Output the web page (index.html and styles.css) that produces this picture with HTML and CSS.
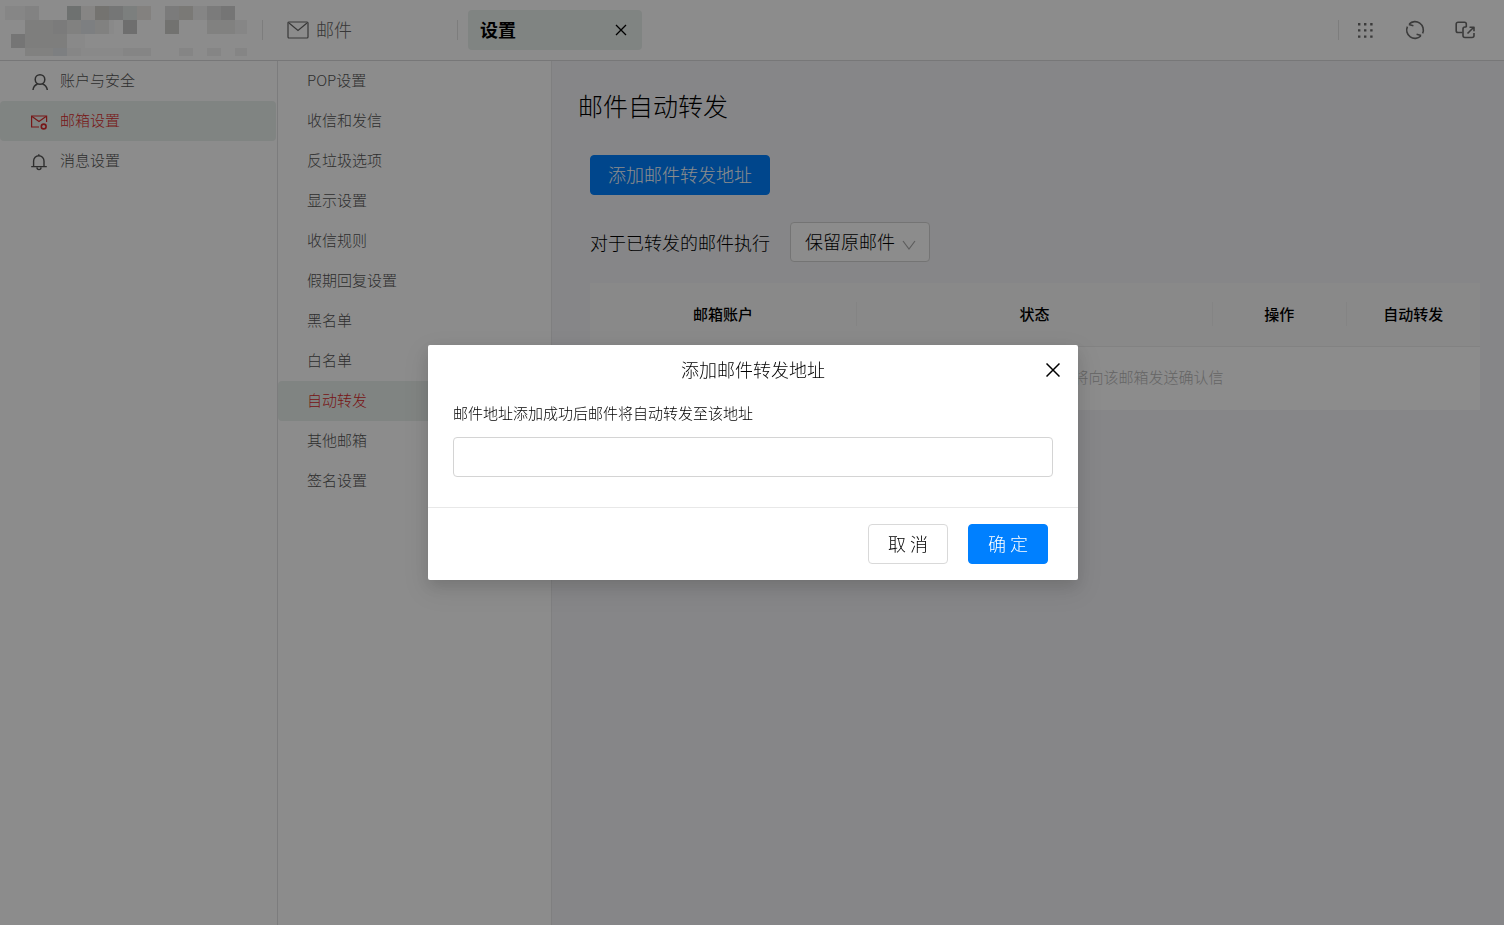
FILE: index.html
```html
<!DOCTYPE html>
<html lang="zh-CN">
<head>
<meta charset="utf-8">
<title>邮件自动转发</title>
<link rel="stylesheet" href="styles.css">
</head>
<body>
<div class="app">
  <header class="topbar">
    <div class="brand">
      <svg class="mosaic" width="242" height="50" viewBox="0 0 242 50" shape-rendering="crispEdges" aria-hidden="true">
        <path fill="#fafafa" d="M6 0h14v14H6zM104 14h5v14h-5zM62 28h18v14H62zM76 42h42v8H76z"/>
        <path fill="#f3f3f3" d="M20 0h14v14H20zM118 42h28v8h-28zM174 42h14v8h-14zM202 42h14v8h-14zM230 42h12v8h-12zM188 0h14v14h-14z"/>
        <path fill="#ededed" d="M20 0h14v14H20z"/>
        <path fill="#f4f4f4" d="M0 0h20v14H0z"/>
        <path fill="#c9cecc" d="M62 0h14v14H62z"/>
        <path fill="#f5f3f0" d="M76 0h14v14H76z"/>
        <path fill="#d3d2cd" d="M90 0h14v14H90z"/>
        <path fill="#d6d7d8" d="M104 0h14v14h-14z"/>
        <path fill="#e2e7e6" d="M118 0h14v14h-14z"/>
        <path fill="#eeece8" d="M132 0h14v14h-14z"/>
        <path fill="#e0e0e0" d="M160 0h14v14h-14zM202 0h14v14h-14zM48 14h14v14H48z"/>
        <path fill="#deddd8" d="M174 0h14v14h-14z"/>
        <path fill="#d6d6d6" d="M216 0h14v14h-14zM6 28h14v14H6z"/>
        <path fill="#e6e6e3" d="M20 14h28v14H20zM20 28h42v14H20z"/>
        <path fill="#ececea" d="M62 14h14v14H62zM90 14h14v14H90zM202 14h28v14h-28zM20 42h28v8H20z"/>
        <path fill="#e4e7eb" d="M76 14h14v14H76zM48 42h14v8H48z"/>
        <path fill="#c8c8c8" d="M118 14h14v14h-14z"/>
        <path fill="#d0d0cc" d="M160 14h14v14h-14z"/>
        <path fill="#f4f4f4" d="M230 14h12v14h-12zM62 42h14v8H62z"/>
        <path fill="#fff" d="M0 14h6v14H0z"/>
      </svg>
    </div>
    <nav class="tabs">
      <a class="tab tab-mail" href="#mail">
        <svg width="22" height="18" viewBox="0 0 22 18" fill="none" stroke="currentColor" stroke-width="1.200" aria-hidden="true"><rect x="1" y="1" width="20" height="16" rx="1"/><path d="M2 2l9 7.500 9-7.500"/></svg>
        <span>邮件</span>
      </a>
      <div class="tab tab-active">
        <span>设置</span>
        <button class="icon-btn" type="button" aria-label="关闭标签">
          <svg width="12" height="12" viewBox="0 0 12 12" stroke="currentColor" stroke-width="1.300" aria-hidden="true"><path d="M1 1l10 10M11 1L1 11"/></svg>
        </button>
      </div>
    </nav>
    <div class="tools">
      <button class="icon-btn" type="button" aria-label="应用">
        <svg width="20" height="20" viewBox="0 0 20 20" fill="currentColor" aria-hidden="true"><path d="M3 3h2.400v2.400H3zM9 3h2.400v2.400H9zM15.200 3h2.400v2.400h-2.400zM3 9.200h2.400v2.400H3zM9 9.200h2.400v2.400H9zM15.200 9.200h2.400v2.400h-2.400zM3 15.400h2.400v2.400H3zM9 15.400h2.400v2.400H9zM15.200 15.400h2.400v2.400h-2.400z"/></svg>
      </button>
      <button class="icon-btn" type="button" aria-label="刷新">
        <svg width="20" height="20" viewBox="0 0 20 20" fill="none" stroke="currentColor" stroke-width="1.600" aria-hidden="true"><path d="M4.200 4A8.300 8.300 0 0 1 17.600 13.300M15.800 16A8.300 8.300 0 0 1 2.400 6.700"/><path d="M3.800 4.400l4.600 1.400M16.200 15.600l-4.600-1.400"/></svg>
      </button>
      <button class="icon-btn" type="button" aria-label="新窗口打开">
        <svg width="20" height="20" viewBox="0 0 20 20" fill="none" stroke="currentColor" stroke-width="1.600" stroke-linejoin="round" aria-hidden="true"><path d="M7.500 12.500H3A1.800 1.800 0 0 1 1.200 10.700V4A1.800 1.800 0 0 1 3 2.200h6.500A1.800 1.800 0 0 1 11.300 4v3"/><path d="M11.500 7H10a2 2 0 0 0-2 2v6.500a2 2 0 0 0 2 2h7a2 2 0 0 0 2-2V13"/><path d="M12.500 13.500l6-6M14.500 7.200H19v4"/></svg>
      </button>
    </div>
  </header>

  <div class="layout">
    <nav class="side" aria-label="设置分类">
      <a class="item" href="#account">
        <svg width="18" height="18" viewBox="0 0 18 18" fill="none" stroke="currentColor" stroke-width="1.500" aria-hidden="true"><circle cx="10" cy="6.500" r="4.800"/><path d="M3 17a7.300 7.300 0 0 1 4.500-6M17.300 17a7.300 7.300 0 0 0-4.800-6"/></svg>
        <span>账户与安全</span>
      </a>
      <a class="item current" href="#mailbox" aria-current="page">
        <svg width="18" height="18" viewBox="0 0 18 18" fill="none" stroke="currentColor" stroke-width="1.200" aria-hidden="true"><path d="M9 14H1.600V3h15v6"/><path d="M2 3.500l7 5 7-5"/><circle cx="13.700" cy="13.500" r="2.400" stroke-width="1.600"/></svg>
        <span>邮箱设置</span>
      </a>
      <a class="item" href="#notice">
        <svg width="18" height="18" viewBox="0 0 18 18" fill="none" stroke="currentColor" stroke-width="1.400" aria-hidden="true"><path d="M1.200 13.600h15.600M3.600 13.600V8a5.200 5.200 0 0 1 10.400 0v5.600M8.800 2.800V1.200M7 14.600a2 2 0 0 0 4 0"/></svg>
        <span>消息设置</span>
      </a>
    </nav>

    <nav class="sub" aria-label="邮箱设置">
      <a class="item" href="#pop">POP设置</a>
      <a class="item" href="#io">收信和发信</a>
      <a class="item" href="#spam">反垃圾选项</a>
      <a class="item" href="#display">显示设置</a>
      <a class="item" href="#rules">收信规则</a>
      <a class="item" href="#vacation">假期回复设置</a>
      <a class="item" href="#black">黑名单</a>
      <a class="item" href="#white">白名单</a>
      <a class="item current" href="#forward" aria-current="page">自动转发</a>
      <a class="item" href="#other">其他邮箱</a>
      <a class="item" href="#sign">签名设置</a>
    </nav>

    <main class="content">
      <h1>邮件自动转发</h1>
      <div class="panel">
        <button class="btn primary" type="button">添加邮件转发地址</button>
        <div class="policy">
          <label for="policy">对于已转发的邮件执行</label>
          <div class="select">
            <select id="policy"><option>保留原邮件</option></select>
            <svg width="14" height="10" viewBox="0 0 14 10" fill="none" stroke="currentColor" stroke-width="1.200" aria-hidden="true"><path d="M1 1l6 8 6-8"/></svg>
          </div>
        </div>
        <table>
          <thead>
            <tr><th class="w-account"><span>邮箱账户</span></th><th class="w-state"><span>状态</span></th><th class="w-op"><span>操作</span></th><th class="w-op"><span>自动转发</span></th></tr>
          </thead>
          <tbody>
            <tr><td colspan="4">您添加邮件转发地址成功后，系统将向该邮箱发送确认信</td></tr>
          </tbody>
        </table>
      </div>
    </main>
  </div>
</div>

<div class="mask">
  <div class="modal" role="dialog" aria-modal="true" aria-labelledby="modal-title">
    <div class="modal-head">
      <h2 id="modal-title">添加邮件转发地址</h2>
      <button class="icon-btn modal-close" type="button" aria-label="关闭">
        <svg width="14" height="14" viewBox="0 0 14 14" stroke="currentColor" stroke-width="1.500" aria-hidden="true"><path d="M.500.500l13 13M13.500.500l-13 13"/></svg>
      </button>
    </div>
    <div class="modal-body">
      <label for="address">邮件地址添加成功后邮件将自动转发至该地址</label>
      <input id="address" type="text">
    </div>
    <div class="modal-foot">
      <button class="btn" type="button">取 消</button>
      <button class="btn primary" type="button">确 定</button>
    </div>
  </div>
</div>
</body>
</html>
```
FILE: styles.css
```css
* { box-sizing: border-box; }

body {
  margin: 0;
  font-family: "Noto Sans CJK SC", sans-serif;
  font-size: 15px;
  font-weight: 300;
  line-height: 24px;
  color: #000;
}

button, input, select { font: inherit; color: inherit; }
a { color: inherit; text-decoration: none; }
h1, h2 { margin: 0; font-weight: 300; }

.app {
  display: flex;
  flex-direction: column;
  min-height: 100vh;
  background: #fff;
}

/* Top bar */
.topbar {
  display: flex;
  align-items: center;
  height: 61px;
  border-bottom: 1px solid #d9d9db;
}

.brand {
  display: flex;
  width: 262px;
  padding: 2px 0 0 5px;
}

.tabs {
  display: flex;
  align-items: center;
  flex: 1;
  gap: 10px;
}

.tab {
  display: flex;
  align-items: center;
  font-size: 18px;
}

.tab span { padding-bottom: 2px; }

.tab-mail {
  gap: 7px;
  width: 196px;
  height: 20px;
  padding-left: 24px;
  border: solid #e4e4e4;
  border-width: 0 1px;
  color: #666;
}

.tab-active {
  justify-content: space-between;
  width: 174px;
  height: 40px;
  padding: 0 15px 0 12px;
  border-radius: 4px;
  background: #eaf0ed;
  font-weight: 700;
}

.icon-btn {
  display: flex;
  padding: 0;
  border: 0;
  background: none;
}

.tools {
  display: flex;
  align-items: center;
  height: 20px;
  gap: 30px;
  padding: 0 29px 0 16px;
  border-left: 1px solid #e4e4e4;
}

.tools .icon-btn { color: #6c6c6c; }

/* Columns */
.layout {
  display: flex;
  flex: 1;
}

.side {
  width: 278px;
  padding-right: 1px;
  border-right: 1px solid #e2e2e4;
}

.sub {
  width: 274px;
  border-right: 1px solid #e8e8ea;
}

.item {
  display: flex;
  align-items: center;
  gap: 12px;
  height: 40px;
  padding: 0 0 2px 30px;
  border-radius: 4px;
  color: #555;
}

.sub .item { padding-left: 29px; }

.item svg { margin-top: 4px; }

.item.current {
  background: #eaf0ed;
  color: #d92b2b;
}

.content {
  flex: 1;
  padding: 26px 24px 24px 26px;
  background: #f4f4f7;
}

.content h1 {
  font-size: 25px;
  line-height: 36px;
}

.panel {
  padding: 32px 0 0 12px;
}

.btn {
  height: 40px;
  padding: 0 17px 3px;
  border: 1px solid #d9d9d9;
  border-radius: 4px;
  background: #fff;
  font-size: 18px;
}

.btn.primary {
  border-color: #0080ff;
  background: #0080ff;
  color: #fff;
}

.policy {
  display: flex;
  align-items: center;
  gap: 20px;
  margin: 27px 0 21px;
  font-size: 18px;
}

.select {
  position: relative;
  width: 140px;
  height: 40px;
}

.select select {
  width: 100%;
  height: 100%;
  padding: 0 14px 2px;
  appearance: none;
  border: 1px solid #d4d4d4;
  border-radius: 4px;
  background: #fff;
}

.select svg {
  position: absolute;
  top: 18px;
  right: 14px;
  color: #aaa;
  pointer-events: none;
}

table {
  width: 100%;
  table-layout: fixed;
  border-collapse: collapse;
  text-align: center;
}

th {
  height: 63px;
  padding: 0;
  border-bottom: 1px solid #ededed;
  background: #fafafa;
  font-weight: 500;
}

th span { display: block; }
th:not(:last-child) span { border-right: 1px solid #f0f0f0; }
.w-account { width: 30%; }
.w-state { width: 40%; }
.w-op { width: 15%; }

td {
  height: 64px;
  padding: 0 0 2px 2px;
  background: #fff;
  color: #b8b8b8;
}

/* Modal */
.mask {
  position: fixed;
  inset: 0;
  display: flex;
  align-items: center;
  justify-content: center;
  padding-left: 2px;
  background: rgba(0, 0, 0, 0.45);
}

.modal {
  width: 650px;
  max-width: 100%;
  border-radius: 2px;
  background: #fff;
  box-shadow: 0 6px 16px rgba(0, 0, 0, 0.12), 0 9px 28px 8px rgba(0, 0, 0, 0.06);
}

.modal-head {
  position: relative;
  display: flex;
  align-items: center;
  justify-content: center;
  height: 50px;
}

.modal-head h2 {
  padding-bottom: 2px;
  font-size: 18px;
}

.modal-close {
  position: absolute;
  top: 18px;
  right: 18px;
}

.modal-body {
  display: flex;
  flex-direction: column;
  gap: 12px;
  padding: 6px 25px 30px;
}

.modal-body input {
  width: 100%;
  height: 40px;
  padding: 0 12px;
  border: 1px solid #d4d4d4;
  border-radius: 4px;
  background: #fff;
}

.modal-foot {
  display: flex;
  justify-content: flex-end;
  gap: 20px;
  padding: 16px 30px;
  border-top: 1px solid #e8e8e8;
}

.modal-foot .btn { width: 80px; }
```
